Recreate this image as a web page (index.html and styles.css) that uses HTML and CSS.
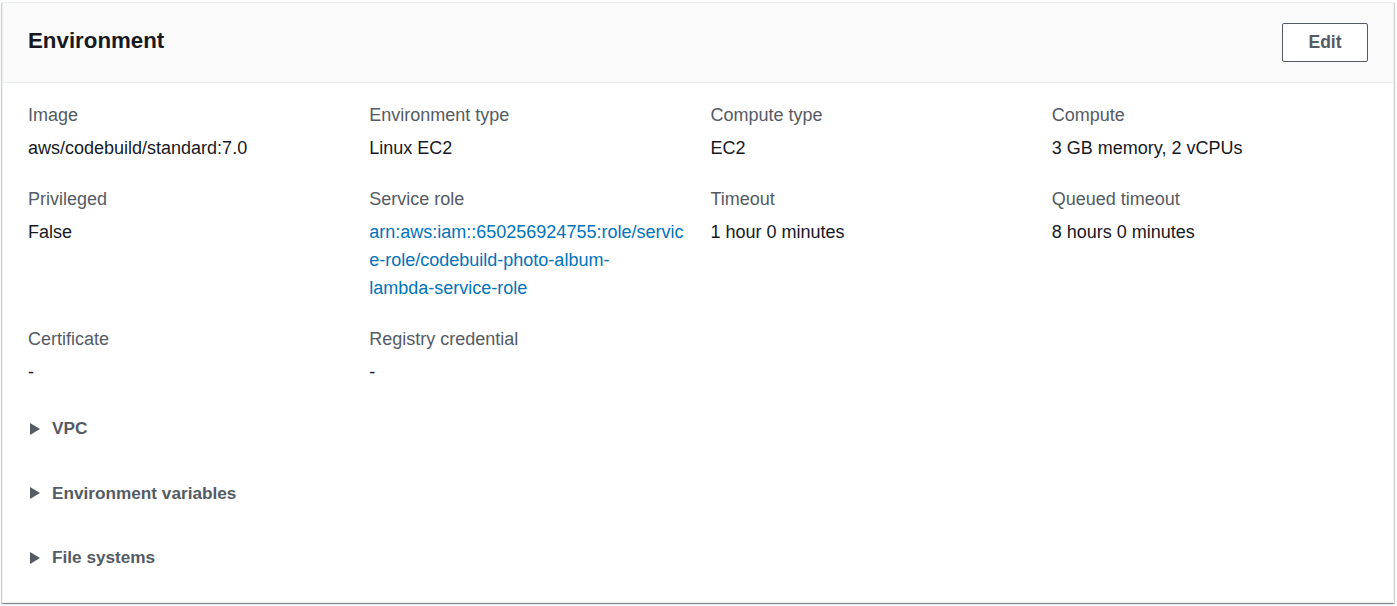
FILE: index.html
```html
<!DOCTYPE html>
<html lang="en">
<head>
<meta charset="utf-8">
<title>Environment</title>
<link rel="stylesheet" href="styles.css">
</head>
<body>
<section class="card">
  <header class="card-header">
    <h2 class="card-title">Environment</h2>
    <button class="btn" type="button">Edit</button>
  </header>
  <div class="card-body">
    <div class="kv-grid">
      <div class="kv">
        <div class="kv-label">Image</div>
        <div class="kv-value">aws/codebuild/standard:7.0</div>
      </div>
      <div class="kv">
        <div class="kv-label">Environment type</div>
        <div class="kv-value">Linux EC2</div>
      </div>
      <div class="kv">
        <div class="kv-label">Compute type</div>
        <div class="kv-value">EC2</div>
      </div>
      <div class="kv">
        <div class="kv-label">Compute</div>
        <div class="kv-value">3 GB memory, 2 vCPUs</div>
      </div>
      <div class="kv">
        <div class="kv-label">Privileged</div>
        <div class="kv-value">False</div>
      </div>
      <div class="kv">
        <div class="kv-label">Service role</div>
        <div class="kv-value"><a class="link" href="#">arn:aws:iam::650256924755:role/service-role/codebuild-photo-album-<span class="nowrap">lambda-service-role</span></a></div>
      </div>
      <div class="kv">
        <div class="kv-label">Timeout</div>
        <div class="kv-value">1 hour 0 minutes</div>
      </div>
      <div class="kv">
        <div class="kv-label">Queued timeout</div>
        <div class="kv-value">8 hours 0 minutes</div>
      </div>
      <div class="kv">
        <div class="kv-label">Certificate</div>
        <div class="kv-value">-</div>
      </div>
      <div class="kv">
        <div class="kv-label">Registry credential</div>
        <div class="kv-value">-</div>
      </div>
    </div>
    <div class="expanders">
      <div class="expander"><span class="caret"></span><span class="exp-title">VPC</span></div>
      <div class="expander"><span class="caret"></span><span class="exp-title">Environment variables</span></div>
      <div class="expander"><span class="caret"></span><span class="exp-title">File systems</span></div>
    </div>
  </div>
</section>
</body>
</html>
```
FILE: styles.css
```css
html, body {
  margin: 0;
  padding: 0;
  background: #ffffff;
}
body {
  font-family: "Liberation Sans", Arial, sans-serif;
  color: #16191f;
  padding: 2px 3px 2px 2px;
}
.card {
  border: 1px solid #eaeded;
  background: #ffffff;
  box-shadow: 0 1px 1px 0 rgba(0, 28, 36, 0.3), 1px 1px 1px 0 rgba(0, 28, 36, 0.15), -1px 1px 1px 0 rgba(0, 28, 36, 0.15);
  height: 601px;
  box-sizing: border-box;
}
.card-header {
  background: #fafafa;
  border-bottom: 1px solid #eaeded;
  height: 79px;
  display: flex;
  align-items: center;
  justify-content: space-between;
  padding: 0 25px;
}
.card-title {
  margin: 0 0 4px 0;
  font-size: 22.3px;
  line-height: 28px;
  font-weight: 700;
  color: #16191f;
}
.btn {
  font-family: "Liberation Sans", Arial, sans-serif;
  font-size: 17.5px;
  font-weight: 700;
  color: #545b64;
  background: #ffffff;
  border: 1px solid #545b64;
  border-radius: 2px;
  width: 86px;
  height: 39px;
  padding: 0;
  margin-bottom: 1px;
}
.card-body {
  padding: 18px 0 0 25px;
}
.kv-grid {
  display: grid;
  grid-template-columns: repeat(4, 1fr);
  row-gap: 23px;
}
.kv {
  padding-right: 20px;
  font-size: 18px;
  line-height: 28px;
  overflow-wrap: anywhere;
}
.kv-label {
  color: #545b64;
  margin-bottom: 5px;
}
.kv-value {
  color: #16191f;
}
.link {
  color: #0073bb;
  text-decoration: none;
}
.nowrap {
  white-space: nowrap;
}
.expanders {
  padding-top: 10px;
}
.expander {
  display: flex;
  align-items: center;
  padding: 18px 0 18.5px 0;
  line-height: 28px;
}
.caret {
  width: 0;
  height: 0;
  border-top: 6.5px solid transparent;
  border-bottom: 6.5px solid transparent;
  border-left: 10px solid #545b64;
  margin-left: 2px;
  margin-right: 12px;
  margin-top: 1px;
}
.exp-title {
  font-size: 17.2px;
  font-weight: 700;
  color: #545b64;
}
```
